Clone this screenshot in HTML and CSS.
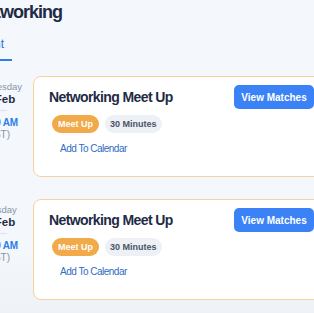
FILE: index.html
```html
<!DOCTYPE html>
<html lang="en">
<head>
    <meta charset="UTF-8">
    <meta name="viewport" content="width=device-width, initial-scale=1.0">
    <title>Networking</title>
    <link rel="stylesheet" href="styles.css">
</head>
<body>
    <div class="page">
        <h1 class="page-title">Networking</h1>

        <div class="tabs">
            <a class="tab active">Current</a>
        </div>

        <div class="events">
            <div class="event-row">
                <div class="date-col">
                    <div class="weekday">Wednesday</div>
                    <div class="day">12 Feb</div>
                    <div class="divider"></div>
                    <div class="time">10:00 AM</div>
                    <div class="zone">(EST)</div>
                </div>
                <div class="card">
                    <div class="card-head">
                        <h2>Networking Meet Up</h2>
                        <button class="btn">View Matches</button>
                    </div>
                    <div class="badges">
                        <span class="badge badge-type">Meet Up</span>
                        <span class="badge badge-time">30 Minutes</span>
                    </div>
                    <a class="calendar-link">Add To Calendar</a>
                </div>
            </div>

            <div class="event-row">
                <div class="date-col">
                    <div class="weekday">Thursday</div>
                    <div class="day">13 Feb</div>
                    <div class="divider"></div>
                    <div class="time">10:00 AM</div>
                    <div class="zone">(EST)</div>
                </div>
                <div class="card">
                    <div class="card-head">
                        <h2>Networking Meet Up</h2>
                        <button class="btn">View Matches</button>
                    </div>
                    <div class="badges">
                        <span class="badge badge-type">Meet Up</span>
                        <span class="badge badge-time">30 Minutes</span>
                    </div>
                    <a class="calendar-link">Add To Calendar</a>
                </div>
            </div>
        </div>
    </div>
</body>
</html>
```

FILE: styles.css
```css
html, body {
    margin: 0;
    height: 100%;
}
body {
    font-family: "Liberation Sans", Arial, sans-serif;
    background: linear-gradient(#f4f8fc, #f4f8fc 80%, #eef2f6);
    overflow: hidden;
}
.page {
    margin-left: -33px;
    width: 363px;
}
.page-title {
    margin: 0 0 0 7px;
    font-size: 18px;
    line-height: 24px;
    letter-spacing: -1px;
    color: #1f2b46;
}
.tabs {
    display: flex;
    margin-top: 13px;
    margin-left: -11px;
}
.tab {
    padding: 0 8px 8px 8px;
    font-size: 12px;
    line-height: 14px;
    color: #2b6fd6;
    border-bottom: 2px solid transparent;
}
.tab.active {
    border-bottom-color: #2b7de9;
}
.events {
    display: flex;
    flex-direction: column;
    gap: 22px;
    margin-top: 15px;
}
.event-row {
    display: flex;
    gap: 6px;
}
.date-col {
    width: 60px;
    flex-shrink: 0;
    padding-top: 5px;
    text-align: center;
}
.weekday {
    font-size: 9.5px;
    line-height: 12px;
    color: #8a93a5;
}
.day {
    font-size: 11.5px;
    line-height: 13px;
    font-weight: bold;
    color: #1f2b46;
}
.divider {
    width: 20px;
    height: 1px;
    margin: 4px auto 6px;
    background-color: #dde2ea;
}
.time {
    font-size: 10px;
    line-height: 12px;
    font-weight: bold;
    letter-spacing: -0.2px;
    color: #2b7de9;
}
.zone {
    font-size: 10px;
    line-height: 12px;
    color: #8a93a5;
}
.card {
    flex: 1;
    background-color: #fff;
    border: 1px solid #f6d29c;
    border-radius: 8px;
    padding: 8px 16px 21px 15px;
}
.card-head {
    display: flex;
    justify-content: space-between;
    align-items: center;
}
.card-head h2 {
    margin: 0;
    font-size: 14px;
    letter-spacing: -0.6px;
    color: #1f2b46;
}
.btn {
    width: 80px;
    height: 24px;
    padding: 0;
    border: none;
    border-radius: 5px;
    background-color: #3b82f6;
    color: #fff;
    font-family: inherit;
    font-size: 10px;
    font-weight: bold;
    margin-right: -1px;
}
.badges {
    display: flex;
    gap: 6px;
    margin-top: 6px;
    padding-left: 3px;
}
.badge {
    height: 18px;
    line-height: 18px;
    padding: 0 6px;
    border-radius: 9px;
    font-size: 9px;
    font-weight: bold;
}
.badge-type {
    background-color: #f2a949;
    color: #fff;
}
.badge-time {
    padding: 0 5px;
    background-color: #edf0f5;
    color: #4a5468;
}
.calendar-link {
    display: block;
    margin-top: 9px;
    padding-left: 11px;
    font-size: 10px;
    line-height: 13px;
    letter-spacing: -0.5px;
    color: #2f6cc4;
}
```
